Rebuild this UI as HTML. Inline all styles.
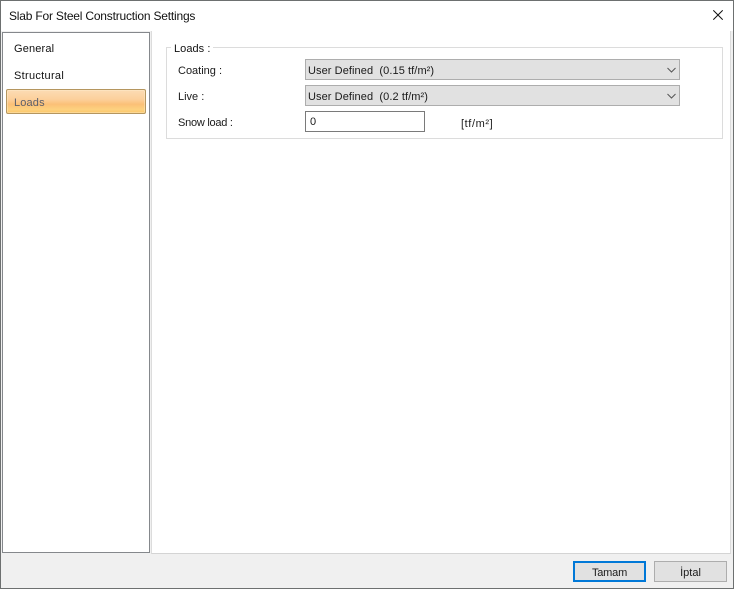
<!DOCTYPE html>
<html><head><meta charset="utf-8"><style>
html,body{margin:0;padding:0;width:734px;height:589px;overflow:hidden;background:#fff}
body{position:relative;font-family:"Liberation Sans",sans-serif;font-size:11px;color:#1a1a1a}
div,span{position:absolute;box-sizing:border-box;white-space:pre}
.t{line-height:14px;height:14px}
</style></head><body>
<div style="left:0;top:0;width:734px;height:589px;background:#f0f0f0;border:1px solid #6d7070"></div>
<div style="left:1px;top:1px;width:732px;height:30px;background:#fff"></div>
<div class="t" style="left:9px;top:9px;font-size:12px;letter-spacing:-.2px;color:#111">Slab For Steel Construction Settings</div>
<svg style="position:absolute;left:713px;top:10px" width="10" height="10" viewBox="0 0 10 10"><path d="M.3.3L9.7 9.7M9.7.3L.3 9.7" stroke="#111" stroke-width="1" fill="none"/></svg>

<div style="left:2px;top:32px;width:148px;height:521px;background:#fff;border:1px solid #85888c"></div>
<div class="t" style="left:14px;top:42px;letter-spacing:.15px;color:#111">General</div>
<div class="t" style="left:14px;top:69px;letter-spacing:.3px;color:#111">Structural</div>
<div style="left:6px;top:89px;width:140px;height:25px;border:1px solid #b5965f;border-radius:2px;background:linear-gradient(#fcdcb4 0%,#fcd09c 40%,#fbc077 62%,#fdd27f 85%,#fbc568 100%);box-shadow:inset 0 0 0 1px rgba(255,240,210,.4)"></div>
<div class="t" style="left:14px;top:96px;letter-spacing:.15px;color:#5b5f6b">Loads</div>

<div style="left:151px;top:31px;width:580px;height:523px;background:#fff;border-left:1px solid #dcdcdc;border-bottom:1px solid #d4d4d4;border-right:1px solid #dcdcdc"></div>
<div style="left:166px;top:47px;width:557px;height:92px;border:1px solid #dcdcdc"></div>
<div class="t" style="left:171px;top:42px;padding:0 3px;background:#fff;letter-spacing:.05px;color:#111">Loads :</div>

<div class="t" style="left:178px;top:64px">Coating :</div>
<div style="left:305px;top:59px;width:375px;height:21px;background:#e1e1e1;border:1px solid #adadad"></div>
<div class="t" style="left:308px;top:64px;letter-spacing:.08px">User Defined  (0.15 tf/m²)</div>
<svg style="position:absolute;left:666px;top:67px" width="11" height="6" viewBox="0 0 11 6"><path d="M1.5 1L5.5 5L9.5 1" stroke="#555" stroke-width="1" fill="none"/></svg>

<div class="t" style="left:178px;top:90px">Live :</div>
<div style="left:305px;top:85px;width:375px;height:21px;background:#e1e1e1;border:1px solid #adadad"></div>
<div class="t" style="left:308px;top:90px;letter-spacing:.08px">User Defined  (0.2 tf/m²)</div>
<svg style="position:absolute;left:666px;top:93px" width="11" height="6" viewBox="0 0 11 6"><path d="M1.5 1L5.5 5L9.5 1" stroke="#555" stroke-width="1" fill="none"/></svg>

<div class="t" style="left:178px;top:116px;letter-spacing:-.25px">Snow load :</div>
<div style="left:305px;top:111px;width:120px;height:21px;background:#fff;border:1px solid #7a7a7a"></div>
<div class="t" style="left:310px;top:115px">0</div>
<div class="t" style="left:461px;top:117px;letter-spacing:.6px">[tf/m²]</div>

<div style="left:573px;top:561px;width:73px;height:21px;background:#e1e1e1;border:2px solid #0078d7"></div>
<div class="t" style="left:573px;top:566px;width:73px;text-align:center;letter-spacing:-.2px">Tamam</div>
<div style="left:654px;top:561px;width:73px;height:21px;background:#e1e1e1;border:1px solid #adadad"></div>
<div class="t" style="left:654px;top:566px;width:73px;text-align:center">İptal</div>
</body></html>
